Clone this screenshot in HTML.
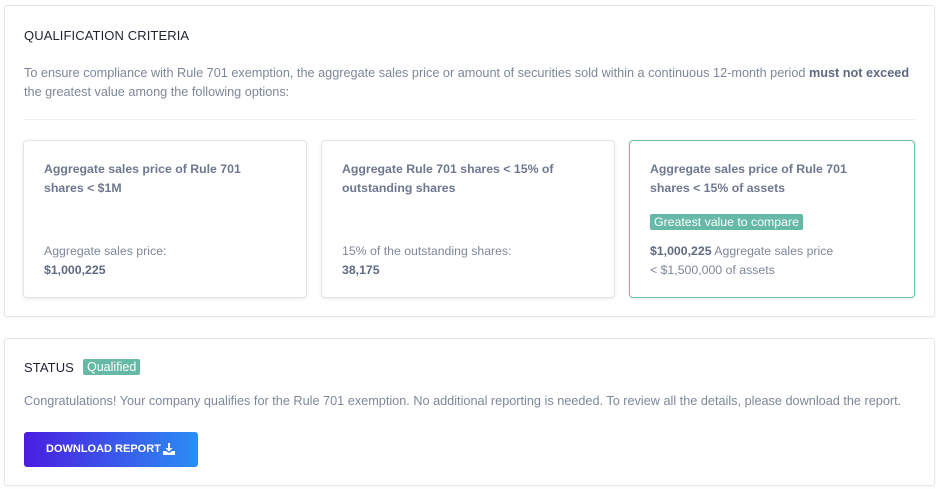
<!DOCTYPE html>
<html><head><style>
*{box-sizing:border-box;margin:0;padding:0}
body{width:939px;height:489px;background:#fff;font-family:"Liberation Sans",sans-serif;position:relative;overflow:hidden}
.card{position:absolute;border:1px solid #e3e6ea;border-radius:3px;background:#fff;box-shadow:0 1px 2px rgba(0,0,0,.04)}
.h{position:absolute;font-size:13px;color:#1f2430;letter-spacing:.1px}
.p{position:absolute;font-size:12.7px;color:#7d879a;line-height:19px}
.sub{position:absolute;top:140px;height:158px;border:1px solid #e0e3e8;border-radius:4px;box-shadow:0 1px 3px rgba(0,0,0,.08)}
.t{position:absolute;left:20px;top:19px;font-size:12.3px;font-weight:bold;color:#6d7790;line-height:19px}
.v{position:absolute;left:20px;font-size:12.3px;color:#7d879a;line-height:19px}
.v b{color:#5f6a82}
.badge{background:#66b9a7;color:#fff;border-radius:2px;font-size:12.3px;padding:1px 4px}
</style></head><body>
<div class="card" style="left:4px;top:5px;width:931px;height:312px">
<div class="h" style="left:19px;top:22px">QUALIFICATION CRITERIA</div>
<div class="p" style="left:19px;top:58px;width:900px">To ensure compliance with Rule 701 exemption, the aggregate sales price or amount of securities sold within a continuous 12-month period <b style="color:#5f6a82">must not exceed</b> the greatest value among the following options:</div>
<div style="position:absolute;left:19px;top:113px;width:892px;height:1px;background:#eef0f2"></div>
</div>
<div class="sub" style="left:23px;width:284px">
<div class="t">Aggregate sales price of Rule 701<br>shares &lt; $1M</div>
<div class="v" style="top:101px">Aggregate sales price:<br><b>$1,000,225</b></div>
</div>
<div class="sub" style="left:321px;width:294px">
<div class="t">Aggregate Rule 701 shares &lt; 15% of<br>outstanding shares</div>
<div class="v" style="top:101px">15% of the outstanding shares:<br><b>38,175</b></div>
</div>
<div class="sub" style="left:629px;width:286px;border:1.5px solid #6cbcaa">
<div class="t">Aggregate sales price of Rule 701<br>shares &lt; 15% of assets</div>
<div style="position:absolute;left:20px;top:72px"><span class="badge">Greatest value to compare</span></div>
<div class="v" style="top:101px"><b>$1,000,225</b> Aggregate sales price<br>&lt; $1,500,000 of assets</div>
</div>
<div class="card" style="left:4px;top:338px;width:931px;height:148px">
<div class="h" style="left:19px;top:21px">STATUS</div>
<div style="position:absolute;left:78px;top:19px"><span class="badge" style="font-size:12.5px">Qualified</span></div>
<div class="p" style="left:19px;top:53px">Congratulations! Your company qualifies for the Rule 701 exemption. No additional reporting is needed. To review all the details, please download the report.</div>
<div style="position:absolute;left:19px;top:93px;width:174px;height:35px;border-radius:3px;background:linear-gradient(90deg,#4a1de0,#2b8ef5);color:#fff;font-size:11px;font-weight:bold;line-height:35px;padding-left:22px">DOWNLOAD REPORT
<svg width="12" height="12" viewBox="0 0 12 12" style="position:absolute;left:139px;top:11px"><path d="M5 0h2v5h2.5L6 8.5 2.5 5H5z" fill="#fff"/><path d="M0 8h3l3 2 3-2h3v4H0z" fill="#fff"/></svg></div>
</div>
</body></html>
